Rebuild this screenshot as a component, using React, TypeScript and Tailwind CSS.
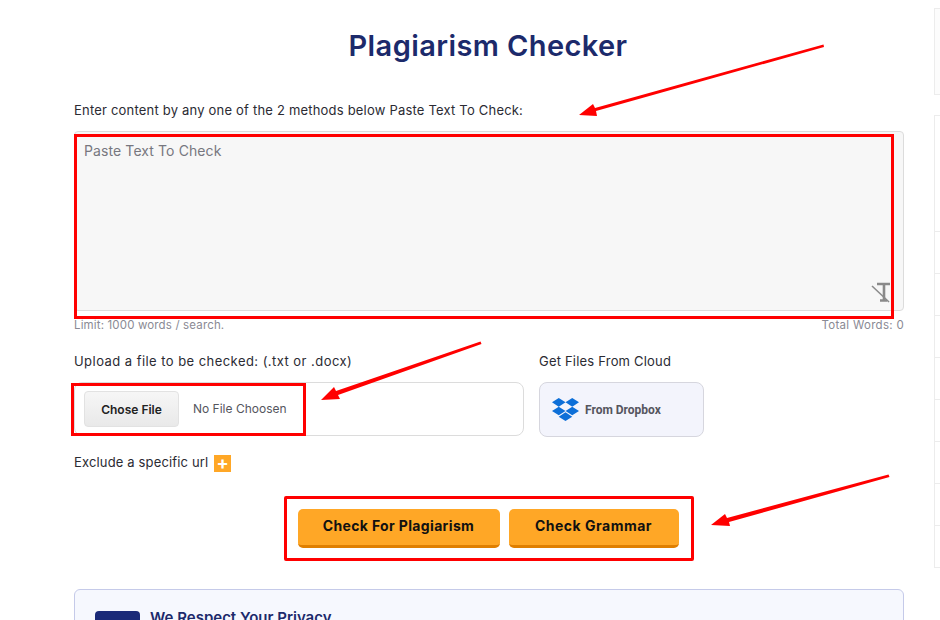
import React from 'react';
import { FaDropbox } from 'react-icons/fa';

const font = { fontFamily: 'Inter, "Liberation Sans", sans-serif' };

const App: React.FC = () => {
  const rows = [0, 1, 2, 3, 4, 5, 6, 7];

  return (
    <div className="relative h-[620px] w-[940px] overflow-hidden bg-white" style={font}>
      <div className="flex">
        {/* Main column */}
        <main className="ml-[74px] w-[830px] shrink-0">
          <h1 className="mt-[27px] h-[38px] pr-[2px] text-center text-[29px] leading-[38px] font-semibold tracking-[0.4px] text-[#1c2a6b]">
            Plagiarism Checker
          </h1>

          <p className="mt-[37px] h-[16px] text-[13px] leading-[16px] tracking-[0.2px] text-[#2b2b33]">
            Enter content by any one of the 2 methods below Paste Text To Check:
          </p>

          <div className="relative mt-[13px]">
            <textarea
              readOnly
              placeholder="Paste Text To Check"
              className="block h-[180px] w-full resize-none rounded border border-[#dcdcdc] bg-[#f7f7f7] px-[9px] py-[9px] text-[14px] leading-[20px] tracking-[0.1px] outline-none placeholder:text-[#77777f]"
            />
            <svg className="absolute top-[150px] left-[797px]" width="20" height="22" viewBox="0 0 20 22" fill="none" stroke="#8a8a8a">
              <path d="M6 3H19M13 3V19M9 19.5H16" strokeWidth="2.6" />
              <path d="M1 5L18 21" strokeWidth="1.6" />
            </svg>
          </div>

          <div className="mt-[6px] flex h-[16px] justify-between text-[11.5px] leading-[16px] text-[#8a8a94]">
            <span className="tracking-[0.15px]">Limit: 1000 words / search.</span>
            <span className="tracking-[0.3px]">Total Words: 0</span>
          </div>

          {/* Upload */}
          <div className="mt-[20px] flex">
            <div className="w-[450px]">
              <p className="h-[16px] text-[13px] leading-[16px] tracking-[0.45px] text-[#2b2b33]">Upload a file to be checked: (.txt or .docx)</p>
              <div className="mt-[13px] flex h-[54px] items-center rounded-lg border border-[#dcdcdc] pl-[9px]">
                <button className="h-[36px] w-[95px] rounded border border-[#e2e2e2] bg-gradient-to-b from-[#f6f6f6] to-[#e9e9e9] pt-[2px] text-[12px] font-semibold text-[#222]">
                  Chose File
                </button>
                <span className="ml-[14px] text-[12px] text-[#55555e]">No File Choosen</span>
              </div>
            </div>
            <div className="ml-[15px] w-[165px]">
              <p className="h-[16px] text-[13px] leading-[16px] tracking-[0.2px] text-[#2b2b33]">Get Files From Cloud</p>
              <div className="mt-[13px] flex h-[55px] items-center rounded-lg border border-[#d6d6de] bg-[#f3f4fc] pl-[12px]">
                <FaDropbox className="text-[27px] text-[#0d6fd8]" />
                <span className="ml-[6px] text-[12px] font-bold text-[#55555e]" style={{ fontFamily: 'Roboto, sans-serif' }}>
                  From Dropbox
                </span>
              </div>
            </div>
          </div>

          {/* Exclude */}
          <div className="mt-[17px] flex h-[18px] items-center text-[13px] tracking-[0.15px] text-[#2b2b33]">
            <span>Exclude a specific url</span>
            <span className="ml-[6px] flex h-[17px] w-[17px] items-center justify-center bg-[#ffa726] text-[18px] leading-none font-bold text-white">
              +
            </span>
          </div>

          {/* Actions */}
          <div className="mt-[37px] flex justify-center gap-[9px] pr-[1px]">
            <button className="ml-[-1px] h-[39px] w-[202px] rounded-[5px] border-b-[3px] border-[#e07f00] bg-[#ffa726] pb-[4px] text-[14px] font-bold tracking-[0.35px] text-[#111]">
              Check For Plagiarism
            </button>
            <button className="h-[39px] w-[170px] rounded-[5px] border-b-[3px] border-[#e07f00] bg-[#ffa726] pb-[4px] text-[14px] font-bold tracking-[0.5px] text-[#111]">
              Check Grammar
            </button>
          </div>

          {/* Privacy card: only its top shows in the window */}
          <div className="mt-[41px] flex h-[90px] items-start rounded-md border border-[#c5cae9] bg-[#f6f8fe] pt-[21px] pl-[20px]">
            <div className="h-[36px] w-[45px] rounded bg-[#1a2a78]" />
            <p className="mt-[-4px] ml-[10px] text-[15px] font-semibold text-[#1c2a6b]">We Respect Your Privacy</p>
          </div>
        </main>

        {/* Sidebar */}
        <aside className="ml-[30px] flex-1 pt-[8px]">
          <div className="h-[87px] border-y border-l border-[#ececec] bg-[#fcfcfc]" />
          <div className="mt-[20px] border-t border-l border-[#ececec]">
            <div className="h-[116px] border-b border-[#ececec]" />
            {rows.map(r => (
              <div key={r} className="h-[42px] border-b border-[#ececec]" />
            ))}
          </div>
        </aside>
      </div>

      {/* Red annotations */}
      <div className="absolute top-[134px] left-[74px] h-[185px] w-[820px] border-[3px] border-[#ff0000]" />
      <div className="absolute top-[383px] left-[71px] h-[53px] w-[235px] border-[3px] border-[#ff0000]" />
      <div className="absolute top-[496px] left-[284px] h-[65px] w-[410px] rounded-[2px] border-[3px] border-[#ff0000]" />
      <svg className="absolute top-0 left-0" width="940" height="620" fill="#ff0000" stroke="none">
        <path d="M823.5 44.5L824 47L596 111L597 116L579 115L593 104L595 108Z" />
        <path d="M480.5 341.5L481.5 344L338 395L340 399L321 400L334 387L336 391Z" />
        <path d="M888.5 474.5L889.5 477L729 522L730 526L711 525L725 514L727 518Z" />
      </svg>
    </div>
  );
};

export default App;
